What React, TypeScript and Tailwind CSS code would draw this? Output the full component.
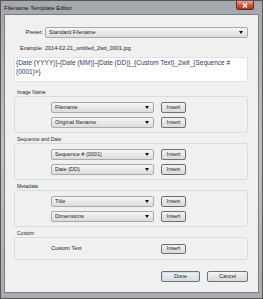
import React from 'react';

const Dropdown = ({ value, className = '' }: { value: string; className?: string }) => (
  <div
    className={`flex h-[11px] items-center justify-between rounded-[2px] border border-[#a9a9a9] bg-linear-to-b from-[#f6f6f6] to-[#dcdcdc] pl-[3px] pr-[4px] ${className}`}
  >
    <span className="text-[5.5px] leading-none text-[#1b1b1b]">{value}</span>
    <span className="h-0 w-0 border-x-[2px] border-t-[3px] border-x-transparent border-t-[#111]" />
  </div>
);

const Button = ({
  children,
  className = '',
}: {
  children: React.ReactNode;
  className?: string;
}) => (
  <button
    className={`flex items-center justify-center rounded-[2px] border border-[#707070] bg-linear-to-b from-[#f3f3f3] to-[#d9d9d9] text-[5.5px] leading-none text-[#1b1b1b] ${className}`}
  >
    {children}
  </button>
);

const Group = ({ label, children, last }: { label: string; children: React.ReactNode; last?: boolean }) => (
  <div className="flex flex-col">
    <div className="h-[7px] pl-[3px] text-[5px] leading-[7px] text-[#2a2a2a]">{label}</div>
    <div
      className={`flex flex-col gap-[4px] rounded-[3px] border border-[#d6dde2] pl-[36px] ${last ? 'pt-[6px] pb-[5px]' : 'pt-[5px] pb-[4px]'}`}
    >
      {children}
    </div>
  </div>
);

const TokenRow = ({ value }: { value: string }) => (
  <div className="flex items-center gap-[7px]">
    <Dropdown value={value} className="w-[103px]" />
    <Button className="h-[11px] w-[25px]">Insert</Button>
  </div>
);

export default function App() {
  return (
    <div className="flex h-[299px] w-[263px] flex-col border border-[#555] bg-linear-to-b from-[#a4a7ab] via-[#bfc1c4] to-[#a9abae] font-['Liberation_Sans',Arial,sans-serif]">
      {/* title bar */}
      <div className="flex h-[13px] shrink-0 justify-between pl-[3px] pr-[8px]">
        <span className="self-center text-[6px] leading-none text-[#111]">Filename Template Editor</span>
        <div className="flex h-[9px] w-[18px] items-center justify-center rounded-b-[3px] border border-t-0 border-[#6e2418] bg-linear-to-b from-[#e3a595] via-[#cf5a43] to-[#b8321c]">
          <svg width="6" height="5" viewBox="0 0 6 5">
            <path d="M1 0.5 L5 4.5 M5 0.5 L1 4.5" stroke="white" strokeWidth="1.3" />
          </svg>
        </div>
      </div>

      {/* client area */}
      <div className="mx-[3px] mb-[5px] flex flex-1 flex-col border border-[#7e7e7e] bg-[#f0f0f0] pl-[9px] pr-[10px] pt-[12px]">
        <div className="flex items-center gap-[2px]">
          <span className="w-[29px] text-right text-[5.5px] leading-none text-[#1b1b1b]">Preset:</span>
          <Dropdown value="Standard Filename" className="flex-1" />
        </div>

        <div className="mt-[6px] flex h-[10px] items-center gap-[2px]">
          <span className="w-[29px] text-right text-[5.5px] leading-none text-[#1b1b1b]">Example:</span>
          <span className="text-[5.5px] leading-none text-[#1b1b1b]">2014-02-21_untitled_2wit_0001.jpg</span>
        </div>

        <div className="mt-[3px] h-[25px] border border-[#e2e2e2] bg-white px-[1px] text-[6.5px] leading-[9px] text-[#2e3766]">
          {'{Date (YYYY)}-{Date (MM)}-{Date (DD)}_{Custom Text}_2wit_{Sequence # (0001)»}'}
        </div>

        <div className="mt-[7px] flex flex-col gap-[3px]">
          <Group label="Image Name">
            <TokenRow value="Filename" />
            <TokenRow value="Original filename" />
          </Group>
          <Group label="Sequence and Date">
            <TokenRow value="Sequence # (0001)" />
            <TokenRow value="Date (DD)" />
          </Group>
          <Group label="Metadata">
            <TokenRow value="Title" />
            <TokenRow value="Dimensions" />
          </Group>
          <Group label="Custom" last>
            <div className="flex items-center gap-[7px]">
              <span className="w-[103px] text-[5.5px] leading-none text-[#1b1b1b]">Custom Text</span>
              <Button className="h-[10px] w-[25px]">Insert</Button>
            </div>
          </Group>
        </div>

        <div className="mt-[11px] flex justify-end gap-[7px]">
          <Button className="h-[11px] w-[39px] border-[#3d7fb4] shadow-[inset_0_0_0_1px_#bfe3f7]">Done</Button>
          <Button className="h-[11px] w-[41px]">Cancel</Button>
        </div>
      </div>
    </div>
  );
}
